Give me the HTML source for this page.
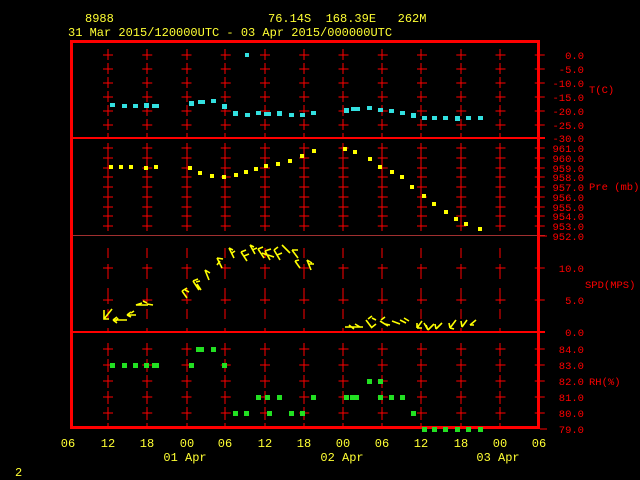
<!DOCTYPE html>
<html><head><meta charset="utf-8"><style>
html,body{margin:0;padding:0;background:#000;width:640px;height:480px;overflow:hidden}
svg{display:block}
text{font-family:"Liberation Mono","DejaVu Sans Mono",monospace}
</style></head><body>
<svg width="640" height="480" viewBox="0 0 640 480" xmlns="http://www.w3.org/2000/svg">
<defs>
<g id="vl" stroke="#f00" stroke-width="1">
<line x1="0" y1="49" x2="0" y2="138" stroke-dasharray="11 3"/>
<line x1="0" y1="143" x2="0" y2="231"/>
<path d="M0 248V258M0 264V279M0 288V304M0 309V319M0 328V332"/>
<line x1="0" y1="343" x2="0" y2="427" stroke-dasharray="13 3"/>
</g>
</defs>
<rect width="640" height="480" fill="#000"/>
<g fill="#ffff33" font-size="12">
<text x="85" y="22">8988</text>
<text x="268" y="22" xml:space="preserve">76.14S  168.39E   262M</text>
<text x="68" y="36">31 Mar 2015/120000UTC - 03 Apr 2015/000000UTC</text>
</g>
<use href="#vl" x="108"/><use href="#vl" x="147"/><use href="#vl" x="187"/>
<use href="#vl" x="225"/><use href="#vl" x="265"/><use href="#vl" x="304"/>
<use href="#vl" x="343"/><use href="#vl" x="382"/><use href="#vl" x="421"/>
<use href="#vl" x="461"/><use href="#vl" x="500"/>
<!-- crosses -->
<g stroke="#f00" stroke-width="1" stroke-dasharray="10 29.25">
<line x1="103" y1="55" x2="545" y2="55"/><line x1="103" y1="69" x2="545" y2="69"/>
<line x1="103" y1="83" x2="545" y2="83"/><line x1="103" y1="97" x2="545" y2="97"/>
<line x1="103" y1="111" x2="545" y2="111"/><line x1="103" y1="125" x2="545" y2="125"/>
<line x1="103" y1="148" x2="545" y2="148"/><line x1="103" y1="158" x2="545" y2="158"/>
<line x1="103" y1="168" x2="545" y2="168"/><line x1="103" y1="177" x2="545" y2="177"/>
<line x1="103" y1="187" x2="545" y2="187"/><line x1="103" y1="197" x2="545" y2="197"/>
<line x1="103" y1="207" x2="545" y2="207"/><line x1="103" y1="216" x2="545" y2="216"/>
<line x1="103" y1="226" x2="545" y2="226"/>
<line x1="103" y1="268" x2="545" y2="268"/><line x1="103" y1="300" x2="545" y2="300"/>
<line x1="103" y1="349" x2="545" y2="349"/><line x1="103" y1="365" x2="545" y2="365"/>
<line x1="103" y1="381" x2="545" y2="381"/><line x1="103" y1="397" x2="545" y2="397"/>
<line x1="103" y1="413" x2="545" y2="413"/>
</g>
<g stroke="#f00" stroke-width="2">
<line x1="70" y1="138" x2="545" y2="138"/>
<line x1="70" y1="332" x2="545" y2="332"/>
</g>
<line x1="70" y1="235.5" x2="545" y2="235.5" stroke="#a03030" stroke-width="1"/>
<rect x="71.5" y="41.5" width="467" height="386" fill="none" stroke="#f00" stroke-width="3"/>
<g stroke="#f00" stroke-width="1">
<line x1="540" y1="236" x2="547" y2="236"/><line x1="540" y1="429" x2="547" y2="429"/>
</g>
<g fill="#f00" font-size="10.5" text-anchor="end">
<text x="584" y="59">0.0</text><text x="584" y="73">-5.0</text><text x="584" y="87">-10.0</text>
<text x="584" y="101">-15.0</text><text x="584" y="115">-20.0</text><text x="584" y="129">-25.0</text>
<text x="584" y="142">-30.0</text>
<text x="584" y="152">961.0</text><text x="584" y="162">960.0</text><text x="584" y="172">959.0</text>
<text x="584" y="181">958.0</text><text x="584" y="191">957.0</text><text x="584" y="201">956.0</text>
<text x="584" y="211">955.0</text><text x="584" y="220">954.0</text><text x="584" y="230">953.0</text>
<text x="584" y="240">952.0</text>
<text x="584" y="272">10.0</text><text x="584" y="304">5.0</text><text x="584" y="336">0.0</text>
<text x="584" y="353">84.0</text><text x="584" y="369">83.0</text><text x="584" y="385">82.0</text>
<text x="584" y="401">81.0</text><text x="584" y="417">80.0</text><text x="584" y="433">79.0</text>
</g>
<g fill="#f00" font-size="10.5">
<text x="589" y="93">T(C)</text>
<text x="589" y="190">Pre (mb)</text>
<text x="585" y="288">SPD(MPS)</text>
<text x="589" y="385">RH(%)</text>
</g>
<g fill="#33e0e0">
<rect x="245" y="53" width="4" height="4"/>
<rect x="110" y="103" width="5" height="4"/><rect x="122" y="104" width="5" height="4"/>
<rect x="133" y="104" width="5" height="4"/><rect x="144" y="103" width="5" height="5"/>
<rect x="152" y="104" width="7" height="4"/><rect x="189" y="101" width="5" height="5"/>
<rect x="198" y="100" width="7" height="4"/><rect x="211" y="99" width="5" height="4"/>
<rect x="222" y="104" width="5" height="5"/><rect x="233" y="111" width="5" height="5"/>
<rect x="245" y="113" width="5" height="4"/><rect x="256" y="111" width="5" height="4"/>
<rect x="264" y="112" width="7" height="4"/><rect x="277" y="111" width="5" height="5"/>
<rect x="289" y="113" width="5" height="4"/><rect x="300" y="113" width="5" height="4"/>
<rect x="311" y="111" width="5" height="4"/><rect x="344" y="108" width="5" height="5"/>
<rect x="351" y="107" width="9" height="4"/><rect x="367" y="106" width="5" height="4"/>
<rect x="378" y="108" width="5" height="4"/><rect x="389" y="109" width="5" height="4"/>
<rect x="400" y="111" width="5" height="4"/><rect x="411" y="113" width="5" height="5"/>
<rect x="422" y="116" width="5" height="4"/><rect x="432" y="116" width="5" height="4"/>
<rect x="443" y="116" width="5" height="4"/><rect x="455" y="116" width="5" height="5"/>
<rect x="466" y="116" width="5" height="4"/><rect x="478" y="116" width="5" height="4"/>
</g>
<g fill="#ffff00">
<rect x="109" y="165" width="4" height="4"/><rect x="119" y="165" width="4" height="4"/>
<rect x="129" y="165" width="4" height="4"/><rect x="144" y="166" width="4" height="4"/>
<rect x="154" y="165" width="4" height="4"/><rect x="188" y="166" width="4" height="4"/>
<rect x="198" y="171" width="4" height="4"/><rect x="210" y="174" width="4" height="4"/>
<rect x="222" y="175" width="4" height="4"/><rect x="234" y="173" width="4" height="4"/>
<rect x="244" y="170" width="4" height="4"/><rect x="254" y="167" width="4" height="4"/>
<rect x="264" y="164" width="4" height="4"/><rect x="276" y="162" width="4" height="4"/>
<rect x="288" y="159" width="4" height="4"/><rect x="300" y="154" width="4" height="4"/>
<rect x="312" y="149" width="4" height="4"/><rect x="343" y="147" width="4" height="4"/>
<rect x="353" y="150" width="4" height="4"/><rect x="368" y="157" width="4" height="4"/>
<rect x="378" y="165" width="4" height="4"/><rect x="390" y="170" width="4" height="4"/>
<rect x="400" y="175" width="4" height="4"/><rect x="410" y="185" width="4" height="4"/>
<rect x="422" y="194" width="4" height="4"/><rect x="432" y="202" width="4" height="4"/>
<rect x="444" y="210" width="4" height="4"/><rect x="454" y="217" width="4" height="4"/>
<rect x="464" y="222" width="4" height="4"/><rect x="478" y="227" width="4" height="4"/>
</g>
<g stroke="#ffff00" stroke-width="1.6" fill="none">
<path d="M104 310v9h5M104 319l8-10"/>
<path d="M113 320h14M113 320l4-3M113 320l4 3M118 318l-2 3"/>
<path d="M136 315h-9M127 315l4-3M127 315l4 2M131 313l3-2"/>
<path d="M142 303l-6 2h12M143 301l4 2M147 304l6 1"/>
<path d="M182 291l5 7M182 291l5-3M185 290l4 2"/>
<path d="M193 281l6 9M193 281l5-2M196 282l4-1M197 284l4 6"/>
<path d="M205 270l4 10M205 270l5 3"/>
<path d="M217 258l5 10M217 258l6 1M220 261l-3 4"/>
<path d="M229 248l5 10M229 248l4 2M232 253l3-2"/>
<path d="M241 252l6 9M241 252l5-2M244 256l5-2"/>
<path d="M250 245l5 9M250 245l4 2M252 250l5-2"/>
<path d="M258 249l6 9M258 249l5-2M262 253l5 2"/>
<path d="M265 251l5 9M265 251l6-2M268 255l6 2"/>
<path d="M274 250l6 10M274 250l4-3M277 255l5-2"/>
<path d="M282 245l8 8"/>
<path d="M292 250l6 8M292 250l6 0"/>
<path d="M295 261l5 7M295 261l4-1"/>
<path d="M307 260l4 10M307 260l5 3M309 264l5 0"/>
<path d="M345 327h18M349 325l5 4M355 324l5 3"/>
<path d="M366 320l6 8M368 319l4-3M372 318l4 2M376 324l-5 4"/>
<path d="M380 321l8 5M381 320l4-3M385 324l5 1"/>
<path d="M392 321l8 3M400 320l6 3M404 318l5 3"/>
<path d="M417 328l5-7M417 328l5 0M417 328l0-5"/>
<path d="M424 323l4 7M428 330l6-6M428 330l-2-5"/>
<path d="M436 329l6-6M436 329l-1-5"/>
<path d="M450 328l6-8M450 328l-1-5M450 328l4 1"/>
<path d="M462 327l5-7M462 327l-1-6"/>
<path d="M470 325l6-5M470 325l4 0"/>
</g>
<g fill="#22e022">
<rect x="110" y="363" width="5" height="5"/><rect x="122" y="363" width="5" height="5"/>
<rect x="133" y="363" width="5" height="5"/><rect x="144" y="363" width="5" height="5"/>
<rect x="152" y="363" width="7" height="5"/><rect x="189" y="363" width="5" height="5"/>
<rect x="222" y="363" width="5" height="5"/>
<rect x="196" y="347" width="8" height="5"/><rect x="211" y="347" width="5" height="5"/>
<rect x="233" y="411" width="5" height="5"/><rect x="244" y="411" width="5" height="5"/>
<rect x="267" y="411" width="5" height="5"/><rect x="289" y="411" width="5" height="5"/>
<rect x="300" y="411" width="5" height="5"/><rect x="411" y="411" width="5" height="5"/>
<rect x="256" y="395" width="5" height="5"/><rect x="265" y="395" width="5" height="5"/>
<rect x="277" y="395" width="5" height="5"/><rect x="311" y="395" width="5" height="5"/>
<rect x="344" y="395" width="5" height="5"/><rect x="350" y="395" width="9" height="5"/>
<rect x="378" y="395" width="5" height="5"/><rect x="389" y="395" width="5" height="5"/>
<rect x="400" y="395" width="5" height="5"/>
<rect x="367" y="379" width="5" height="5"/><rect x="378" y="379" width="5" height="5"/>
<rect x="422" y="427" width="5" height="5"/><rect x="432" y="427" width="5" height="5"/>
<rect x="443" y="427" width="5" height="5"/><rect x="455" y="427" width="5" height="5"/>
<rect x="466" y="427" width="5" height="5"/><rect x="478" y="427" width="5" height="5"/>
</g>
<g fill="#ffff33" font-size="12" text-anchor="middle">
<text x="68" y="447">06</text><text x="108" y="447">12</text><text x="147" y="447">18</text>
<text x="187" y="447">00</text><text x="225" y="447">06</text><text x="265" y="447">12</text>
<text x="304" y="447">18</text><text x="343" y="447">00</text><text x="382" y="447">06</text>
<text x="421" y="447">12</text><text x="461" y="447">18</text><text x="500" y="447">00</text>
<text x="539" y="447">06</text>
<text x="185" y="461">01 Apr</text><text x="342" y="461">02 Apr</text><text x="498" y="461">03 Apr</text>
</g>
<text x="15" y="476" fill="#ffff33" font-size="12">2</text>
</svg>
</body></html>
